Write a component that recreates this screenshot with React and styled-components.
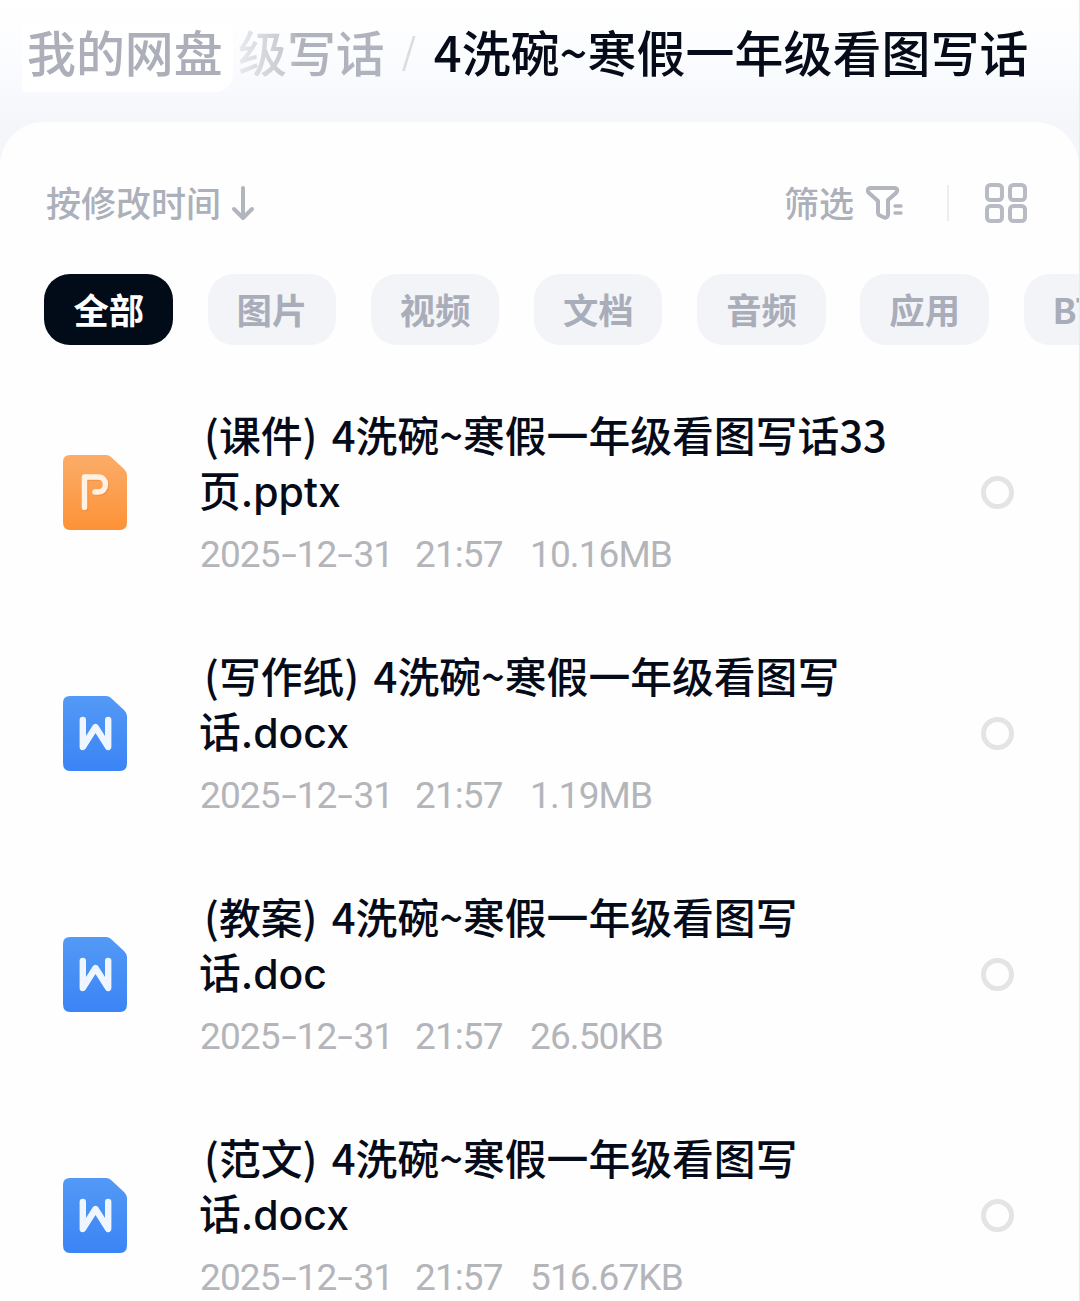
import React from "react"
import styled, { createGlobalStyle } from "styled-components"

const GlobalStyle = createGlobalStyle`
    * {
        box-sizing: border-box;
    }
    body {
        margin: 0;
        background-color: #fefefe;
        font-family: "Noto Sans CJK SC", sans-serif;
    }
`

const Container = styled.div`
    height: 1301px;
    overflow: hidden;
    border-right: 1px solid #e9eaed;
    background: linear-gradient(#ffffff 0px, #fbfcfe 60px, #f5f6fa 125px);
`

const Header = styled.div`
    height: 122px;
    padding: 12px 0 0 22px;
    display: flex;
    align-items: flex-start;
    font-size: 48.9px;
    line-height: 78px;
    white-space: nowrap;
`

const Root = styled.div`
    width: 211px;
    height: 69px;
    margin-top: 11px;
    padding-left: 5px;
    line-height: 56px;
    border-radius: 4px 4px 18px 4px;
    background-color: #ffffff;
    color: #acafba;
    font-weight: 500;
`

const Parent = styled.div`
    margin-left: 5px;
    color: transparent;
    background: linear-gradient(90deg, #e9eaee 0px, #c9cbd2 44px, #b0b3be 60px);
    background-clip: text;
    -webkit-background-clip: text;
    font-weight: 500;
`

const Slash = styled.div`
    width: 49px;
    padding-left: 17px;
    font-size: 36px;
    line-height: 74px;
    color: #d9dbe0;
`

const Current = styled.div`
    color: #050b18;
    font-weight: 500;
    letter-spacing: 0.1px;
`

const Panel = styled.div`
    height: 1179px;
    border-radius: 44px 44px 0 0;
    background-color: #fefefe;
    overflow: hidden;
`

const Toolbar = styled.div`
    height: 152px;
    padding: 10px 52px 0 46px;
    display: flex;
    align-items: center;
    color: #acb0ba;
    font-size: 35px;
    font-weight: 500;
`

const Label = styled.span`
    padding-bottom: 4px;
`

const Sort = styled.div`
    flex: 1;
    display: flex;
    align-items: center;
    gap: 10px;
`

const Filter = styled.div`
    display: flex;
    align-items: center;
    gap: 12px;
`

const Divider = styled.div`
    width: 2px;
    height: 36px;
    margin: 0 36px 0 43px;
    background-color: #eceef1;
`

const Chips = styled.div`
    display: flex;
    gap: 34.8px;
    padding-left: 44.4px;
`

const Chip = styled.div`
    flex: 0 0 128.4px;
    height: 71px;
    padding-left: 29px;
    border-radius: 26px;
    font-size: 35.4px;
    line-height: 70px;
    font-weight: 700;
    white-space: nowrap;
    color: ${(props) => (props.$active ? "#ffffff" : "#a9adba")};
    background-color: ${(props) => (props.$active ? "#020b18" : "#f3f4f8")};
`

const List = styled.div`
    padding-top: 64px;
`

const Row = styled.div`
    height: 166px;
    margin-bottom: 75px;
    padding: 0 65px 0 63px;
    display: flex;
    align-items: center;
`

const Info = styled.div`
    flex: 1;
    margin-left: 72px;
`

const Name = styled.div`
    margin-top: -2px;
    color: #050b18;
    font-size: 41.8px;
    font-weight: 500;
    line-height: 55px;
    text-indent: 5px;
    word-spacing: 5px;
    white-space: nowrap;
`

const NameEnd = styled.div`
    text-indent: 0;
`

const Ext = styled.span`
    font-family: Inter, sans-serif;
    font-size: 41px;
`

const Meta = styled.div`
    padding-top: 14px;
    padding-left: 1px;
    display: flex;
    color: #b3b5ba;
    font-family: Roboto, sans-serif;
    font-size: 37px;
    font-weight: 400;
    line-height: 42px;
    letter-spacing: -0.9px;
`

const Day = styled.div`
    width: 215px;
`

const Dash = styled.span`
    display: inline-block;
    width: 17px;
    text-align: center;
    transform: scaleX(1.5);
`

const Time = styled.div`
    width: 115px;
`

const Circle = styled.div`
    width: 33px;
    height: 33px;
    border: 5px solid #e4e4e5;
    border-radius: 50%;
`

const ArrowIcon = () => (
    <svg width='24' height='36' viewBox='0 0 24 36' fill='none' stroke='#b1b5be' strokeWidth='4' strokeLinecap='round' strokeLinejoin='round'>
        <path d='M12 3V33M3 24L12 33L21 24' />
    </svg>
)

const FilterIcon = () => (
    <svg width='38' height='36' viewBox='0 0 38 36' fill='none' stroke='#b3b6bf' strokeWidth='4' strokeLinecap='round' strokeLinejoin='round'>
        <path d='M4 3H29Q33 4 30 8L22 15V30Q21 34 17 32L13 30Q12 29 12 27V16L3 8Q0 4 4 3Z' />
        <path d='M29 21H35M29 28H35' strokeWidth='3.4' />
    </svg>
)

const GridIcon = () => (
    <svg width='42' height='40' viewBox='0 0 42 40' fill='none' stroke='#b8bbc4' strokeWidth='4'>
        <rect x='2' y='2' width='15' height='15' rx='3.5' />
        <rect x='25' y='2' width='15' height='15' rx='3.5' />
        <rect x='2' y='23' width='15' height='15' rx='3.5' />
        <rect x='25' y='23' width='15' height='15' rx='3.5' />
    </svg>
)

const FileIcon = ({ type }) => {
    const slides = type === "slides"
    return (
        <svg width='64' height='75' viewBox='0 0 64 75' fill='none'>
            <defs>
                <linearGradient id={type} x1='0' y1='0' x2='0' y2='1'>
                    <stop offset='0' stopColor={slides ? "#fbac69" : "#5399f6"} />
                    <stop offset='1' stopColor={slides ? "#fd9237" : "#3b84f5"} />
                </linearGradient>
            </defs>
            <path
                d='M7 0H43Q46 0 48 2L61 14Q64 17 64 20V67Q64 75 57 75H7Q0 75 0 67V7Q0 0 7 0Z'
                fill={`url(#${type})`}
            />
            {slides ? (
                <g strokeWidth='5.5' strokeLinecap='round' strokeLinejoin='round'>
                    <path d='M22.5 53.5V23H36C46 23 46 38 36 38H33' stroke='#e98330' opacity='0.6' />
                    <path d='M21.5 52.5V22H35C45 22 45 37 35 37H32' stroke='#fff2e4' />
                </g>
            ) : (
                <path
                    d='M19.8 24V51L32.5 31L45.2 51V24'
                    stroke='#f0f6ff'
                    strokeWidth='6.4'
                    strokeLinecap='round'
                    strokeLinejoin='round'
                />
            )}
        </svg>
    )
}

const chips = ["全部", "图片", "视频", "文档", "音频", "应用", "BT"]

const files = [
    { type: "slides", start: "(课件) 4洗碗~寒假一年级看图写话33", end: "页", ext: ".pptx", size: "10.16MB" },
    { type: "word", start: "(写作纸) 4洗碗~寒假一年级看图写", end: "话", ext: ".docx", size: "1.19MB" },
    { type: "word", start: "(教案) 4洗碗~寒假一年级看图写", end: "话", ext: ".doc", size: "26.50KB" },
    { type: "word", start: "(范文) 4洗碗~寒假一年级看图写", end: "话", ext: ".docx", size: "516.67KB" },
]

const App = () => {
    return (
        <Container>
            <GlobalStyle />
            <Header>
                <Root>我的网盘</Root>
                <Parent>级写话</Parent>
                <Slash>/</Slash>
                <Current>4洗碗~寒假一年级看图写话</Current>
            </Header>
            <Panel>
                <Toolbar>
                    <Sort>
                        <Label>按修改时间</Label>
                        <ArrowIcon />
                    </Sort>
                    <Filter>
                        <Label>筛选</Label>
                        <FilterIcon />
                    </Filter>
                    <Divider />
                    <GridIcon />
                </Toolbar>
                <Chips>
                    {chips.map((chip, i) => (
                        <Chip key={chip} $active={i === 0}>
                            {chip}
                        </Chip>
                    ))}
                </Chips>
                <List>
                    {files.map((file) => (
                        <Row key={file.start}>
                            <FileIcon type={file.type} />
                            <Info>
                                <Name>
                                    {file.start}
                                    <NameEnd>
                                        {file.end}
                                        <Ext>{file.ext}</Ext>
                                    </NameEnd>
                                </Name>
                                <Meta>
                                    <Day>
                                        2025<Dash>-</Dash>12<Dash>-</Dash>31
                                    </Day>
                                    <Time>21:57</Time>
                                    {file.size}
                                </Meta>
                            </Info>
                            <Circle />
                        </Row>
                    ))}
                </List>
            </Panel>
        </Container>
    )
}

export default App
